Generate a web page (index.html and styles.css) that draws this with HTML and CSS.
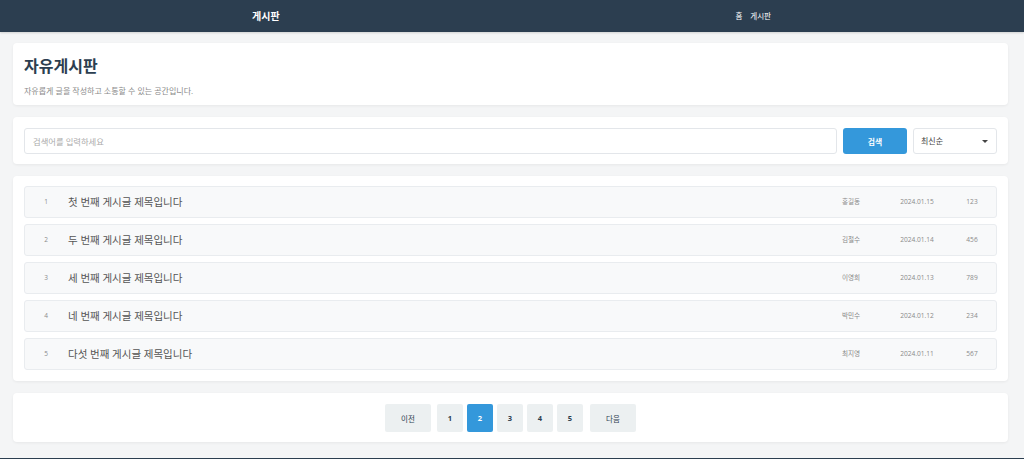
FILE: index.html
```html
<!DOCTYPE html>
<html lang="ko">
<head>
    <meta charset="UTF-8">
    <meta name="viewport" content="width=device-width, initial-scale=1.0">
    <title>자유게시판</title>
    <link rel="stylesheet" href="styles.css">
</head>
<body>
    <header class="site-header">
        <a href="#" class="logo">게시판</a>
        <nav class="nav">
            <a href="#">홈</a>
            <a href="#">게시판</a>
        </nav>
    </header>

    <main class="container">
        <section class="card board-head">
            <h1>자유게시판</h1>
            <p>자유롭게 글을 작성하고 소통할 수 있는 공간입니다.</p>
        </section>

        <section class="card search-bar">
            <input type="text" class="search-input" placeholder="검색어를 입력하세요">
            <button type="button" class="btn-search">검색</button>
            <div class="sort-select">
                <span>최신순</span>
                <span class="caret"></span>
            </div>
        </section>

        <section class="card post-list">
            <div class="post-row">
                <span class="post-no">1</span>
                <span class="post-title">첫 번째 게시글 제목입니다</span>
                <span class="post-author">홍길동</span>
                <span class="post-date">2024.01.15</span>
                <span class="post-views">123</span>
            </div>
            <div class="post-row">
                <span class="post-no">2</span>
                <span class="post-title">두 번째 게시글 제목입니다</span>
                <span class="post-author">김철수</span>
                <span class="post-date">2024.01.14</span>
                <span class="post-views">456</span>
            </div>
            <div class="post-row">
                <span class="post-no">3</span>
                <span class="post-title">세 번째 게시글 제목입니다</span>
                <span class="post-author">이영희</span>
                <span class="post-date">2024.01.13</span>
                <span class="post-views">789</span>
            </div>
            <div class="post-row">
                <span class="post-no">4</span>
                <span class="post-title">네 번째 게시글 제목입니다</span>
                <span class="post-author">박민수</span>
                <span class="post-date">2024.01.12</span>
                <span class="post-views">234</span>
            </div>
            <div class="post-row">
                <span class="post-no">5</span>
                <span class="post-title">다섯 번째 게시글 제목입니다</span>
                <span class="post-author">최지영</span>
                <span class="post-date">2024.01.11</span>
                <span class="post-views">567</span>
            </div>
        </section>

        <section class="card pagination">
            <button type="button" class="page-btn page-wide">이전</button>
            <div class="page-numbers">
                <button type="button" class="page-btn">1</button>
                <button type="button" class="page-btn active">2</button>
                <button type="button" class="page-btn">3</button>
                <button type="button" class="page-btn">4</button>
                <button type="button" class="page-btn">5</button>
            </div>
            <button type="button" class="page-btn page-wide">다음</button>
        </section>
    </main>

    <footer class="site-footer"></footer>
</body>
</html>
```

FILE: styles.css
```css
:root {
    --primary-color: #3498db;
    --dark-color: #2c3e50;
    --text-color: #333;
    --light-text: #8a8a8a;
    --border-color: #e3e6ea;
    --row-bg: #f8f9fa;
    --shadow: 0 1px 3px rgba(0, 0, 0, 0.06);
    --border-radius: 4px;
}

* {
    margin: 0;
    padding: 0;
    box-sizing: border-box;
}

body {
    font-family: "Open Sans", "Noto Sans CJK KR", sans-serif;
    color: var(--text-color);
    background-color: #f4f5f6;
    line-height: 1.4;
}

.site-header {
    height: 32px;
    background-color: var(--dark-color);
    display: flex;
    align-items: center;
    justify-content: space-between;
    padding: 0 253px 0 252px;
    box-shadow: 0 1px 2px rgba(0, 0, 0, 0.15);
}

.logo {
    color: white;
    font-weight: 700;
    font-size: 10px;
    text-decoration: none;
}

.nav {
    display: flex;
    gap: 8px;
}

.nav a {
    color: white;
    font-size: 7.5px;
    text-decoration: none;
}

.container {
    padding: 11px 16px 0 13px;
    display: flex;
    flex-direction: column;
    gap: 12px;
}

.card {
    background-color: white;
    border-radius: var(--border-radius);
    box-shadow: var(--shadow);
    padding: 11px;
}

.board-head {
    height: 62px;
    padding-top: 11px;
}

.board-head h1 {
    font-size: 16px;
    font-weight: 700;
    color: var(--dark-color);
    line-height: 24px;
}

.board-head p {
    font-size: 8px;
    color: var(--light-text);
    margin-top: 7px;
}

.search-bar {
    display: flex;
    gap: 6px;
    padding-bottom: 10px;
}

.search-input {
    flex: 1;
    height: 26px;
    border: 1px solid var(--border-color);
    border-radius: 3px;
    padding: 0 8px;
    font-family: inherit;
    font-size: 8.3px;
    outline: none;
}

.search-input::placeholder {
    color: #aaa;
}

.btn-search {
    width: 64px;
    height: 26px;
    border: none;
    border-radius: 3px;
    background-color: var(--primary-color);
    color: white;
    font-family: inherit;
    font-size: 7.8px;
    font-weight: 700;
}

.sort-select {
    width: 84px;
    height: 26px;
    border: 1px solid var(--border-color);
    border-radius: 3px;
    padding: 0 8px 0 7px;
    display: flex;
    align-items: center;
    justify-content: space-between;
    font-size: 8px;
    color: #444;
}

.caret {
    width: 0;
    height: 0;
    border-left: 3px solid transparent;
    border-right: 3px solid transparent;
    border-top: 3px solid #444;
}

.post-list {
    padding-top: 10px;
    display: flex;
    flex-direction: column;
    gap: 6px;
}

.post-row {
    height: 32px;
    background-color: var(--row-bg);
    border: 1px solid #e9ecef;
    border-radius: 3px;
    display: flex;
    align-items: center;
    padding: 0 4px 0 11px;
}

.post-no {
    width: 20px;
    text-align: center;
    font-size: 6.5px;
    color: var(--light-text);
}

.post-title {
    flex: 1;
    margin-left: 12px;
    font-size: 10.5px;
    color: #555;
}

.post-author,
.post-date,
.post-views {
    text-align: center;
    font-size: 6.6px;
    color: var(--light-text);
}

.post-author {
    width: 62px;
}

.post-date {
    width: 70px;
}

.post-views {
    width: 40px;
}

.pagination {
    display: flex;
    justify-content: center;
    gap: 6px;
    padding-bottom: 10px;
}

.page-numbers {
    display: flex;
    gap: 4px;
    margin-right: 1px;
}

.page-btn {
    width: 26px;
    height: 28px;
    border: none;
    border-radius: 2px;
    background-color: #ecf0f1;
    color: var(--dark-color);
    font-family: inherit;
    font-size: 7.5px;
    font-weight: 700;
}

.page-wide {
    width: 46px;
    font-weight: 400;
}

.page-btn.active {
    background-color: var(--primary-color);
    color: white;
}

.site-footer {
    margin-top: 16px;
    height: 40px;
    background-color: var(--dark-color);
}
```
